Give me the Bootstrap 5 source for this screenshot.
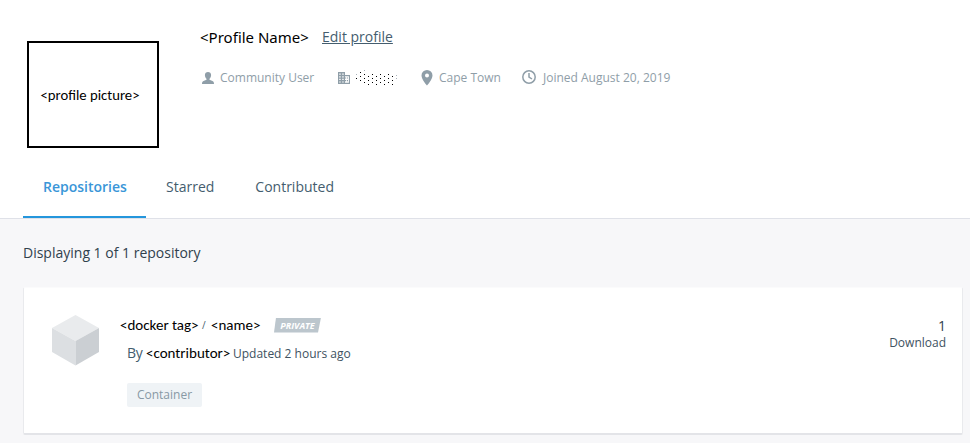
<!DOCTYPE html>
<html lang="en">
<head>
<meta charset="utf-8">
<title>Profile</title>
<link href="https://cdn.jsdelivr.net/npm/bootstrap@5.3.0/dist/css/bootstrap.min.css" rel="stylesheet">
<style>
body{font-family:"Open Sans",sans-serif;font-size:14px;line-height:20px;color:#445d6e;background:#f7f7f9;height:443px;overflow:hidden}
.profile-head{height:219px;border-bottom:1px solid #dfe1e8}
.head-top{height:157px;padding:27px 0 0 27px}
.picture{width:132px;height:107px;border:2px solid #000;margin-top:14px;margin-right:41px;padding:1px 6px 0 0}
.placeholder-text{font-family:Carlito,Lato,sans-serif;font-size:15px;color:#000;white-space:nowrap}
.picture .placeholder-text{font-size:14.7px}
.profile-name{font-family:"Noto Sans",sans-serif;font-size:15px;color:#000;width:122px;white-space:nowrap}
.edit-link{color:#445d6e}
.meta{font-size:12px;color:#8f9ea8;margin-top:21px;white-space:nowrap}
.meta svg{flex:none;fill:#8f9ea8}
.meta .dots{fill:#000;margin:0 23px 0 6px}
.meta .clock{fill:none;stroke:#8f9ea8;stroke-width:1.5;margin:-2px 5px 0 -1px}
.meta .joined{margin-left:1px}
.user-icon{margin:0 6px 1px 2px}
.user-label{width:118px}
.place-label{margin-left:6px;width:83px}
.tabs{height:61px;margin-left:23px}
.tabs .nav-link{height:61px;padding:20px 20px 0;border-radius:0;color:#445d6e;line-height:20px}
.tabs .nav-link.active{width:123px;padding-right:0;color:#3a96d8;font-weight:600;border-bottom:2px solid #2496dc}
.tabs .active + .nav-link{padding-right:21px}
.count{margin:24px 0 0 23px;color:#30414d}
.repo{margin:24px 7px 0 23px;height:148px;border:1px solid #e9eaed;border-top-color:#fbfbfc;border-bottom:2px solid #e3e4e8;border-radius:2px;padding:27px 16px 0 28px;--bs-card-bg:#fff}
.repo-body{margin-left:21px}
.repo-tag{width:82px}
.repo-slash{width:9px;font-size:10px}
.repo-name{width:63px}
.by{width:19px;letter-spacing:-.2px}
.by-name{width:87px}
.ribbon{font-size:9px;font-weight:700;font-style:italic;line-height:16px;height:15px;width:47px;background:#bcc6cd;color:#fff;clip-path:polygon(2px 0,100% 0,calc(100% - 3px) 100%,0 100%);text-align:center}
.by-row{margin:8px 0 0 7px}
.tag{font-size:12px;width:75px;height:24px;line-height:24px;background:#eff3f6;color:#8899a5;border-radius:2px;margin:19px 0 0 7px}
.small-dark{font-size:12px;color:#405261}
.stats{line-height:17px;padding-top:2px}
.stats-num{font-size:14px;color:#30414d}
</style>
<script src="https://cdn.jsdelivr.net/npm/bootstrap@5.3.0/dist/js/bootstrap.bundle.min.js"></script>
</head>
<body>
<header class="profile-head bg-white">
  <div class="head-top d-flex align-items-start">
    <div class="picture d-flex align-items-center justify-content-center"><span class="placeholder-text">&lt;profile picture&gt;</span></div>
    <div>
      <div class="d-flex"><span class="profile-name">&lt;Profile Name&gt;</span><a class="edit-link" href="#">Edit profile</a></div>
      <div class="meta d-flex align-items-center">
        <svg class="user-icon" width="12" height="12" viewBox="0 0 12 12"><path d="M6 0C4.200 0 2.900 1.200 2.900 3c0 1.700.8 3.200 1.600 3.800v1L1.500 9C.4 9.500 0 10.300 0 12h12c0-1.700-.4-2.500-1.500-3L7.500 7.800v-1C8.300 6.200 9.100 4.700 9.100 3 9.100 1.200 7.800 0 6 0z"/></svg>
        <span class="user-label">Community User</span>
        <svg width="12" height="12" viewBox="0 0 12 12"><path fill-rule="evenodd" d="M0 0h7v3h5v9H0zM1.200 1.500v1.200h1.500V1.500zM4.200 1.500v1.200h1.500V1.500zM1.200 4.200v1.200h1.500V4.200zM4.200 4.200v1.200h1.500V4.200zM1.200 6.800V8h1.500V6.800zM4.200 6.800V8h1.500V6.800zM1.200 9.400v1.200h1.500V9.400zM4.200 9.400v1.200h1.500V9.400zM7 4.200v1.200h1.200v1.200H7V8h1.200v1.200H7v1.600h3.900V4.200zM9 5.400h1v1.200H9zM9 8h1v1.200H9z"/></svg>
        <svg class="dots" width="42" height="16" viewBox="0 0 42 16" shape-rendering="crispEdges"><path d="M0 8h1v1H0zM4 2h1v1H4zM4 6h1v1H4zM4 10h1v1H4zM8 4h1v1H8zM8 8h1v1H8zM8 12h1v1H8zM12 6h1v1h-1zM12 10h1v1h-1zM12 14h1v1h-1zM16 4h1v1h-1zM16 8h1v1h-1zM16 12h1v1h-1zM20 6h1v1h-1zM20 10h1v1h-1zM20 14h1v1h-1zM24 4h1v1h-1zM24 8h1v1h-1zM24 12h1v1h-1zM28 6h1v1h-1zM28 10h1v1h-1zM28 14h1v1h-1zM32 4h1v1h-1zM32 8h1v1h-1zM32 12h1v1h-1zM36 6h1v1h-1zM36 10h1v1h-1zM36 14h1v1h-1z"/><path fill="#aab3bb" d="M0 4h1v1H0zM8 0h1v1H8zM40 5h1v1h-1zM40 8h1v1h-1z"/></svg>
        <svg width="12" height="16" viewBox="0 0 12 16"><path fill-rule="evenodd" d="M6 0a5.500 5.500 0 0 0-5.500 5.500C.5 9.500 6 15.500 6 15.500s5.500-6 5.500-10A5.500 5.500 0 0 0 6 0zm0 3.500a2 2 0 1 1 0 4 2 2 0 0 1 0-4z"/></svg>
        <span class="place-label">Cape Town</span>
        <svg class="clock" width="16" height="16" viewBox="0 0 16 16"><path d="M14.200 8A6.200 6.200 0 1 1 1.800 8a6.200 6.200 0 0 1 12.400 0zM8 4v4l3 2"/></svg>
        <span class="joined">Joined August 20, 2019</span>
      </div>
    </div>
  </div>
  <nav class="tabs nav"><a class="nav-link active" href="#">Repositories</a><a class="nav-link" href="#">Starred</a><a class="nav-link" href="#">Contributed</a></nav>
</header>
<main>
  <div class="count">Displaying 1 of 1 repository</div>
  <section class="card repo flex-row align-items-start">
    <svg width="47" height="51" viewBox="0 0 47 51"><path fill="#e9ebed" d="M23.500 0 47 13 23.500 26 0 13z"/><path fill="#dcdfe2" d="M0 13l23.500 13v24.500L0 37z"/><path fill="#cbcfd3" d="M47 13 23.500 26v24.500L47 37z"/></svg>
    <div class="repo-body">
      <div class="d-flex align-items-center"><span class="placeholder-text repo-tag">&lt;docker tag&gt;</span><span class="repo-slash">/</span><span class="placeholder-text repo-name">&lt;name&gt;</span><span class="ribbon">PRIVATE</span></div>
      <div class="by-row d-flex align-items-baseline"><span class="by">By</span><span class="placeholder-text by-name">&lt;contributor&gt;</span><span class="small-dark">Updated 2 hours ago</span></div>
      <div class="tag text-center">Container</div>
    </div>
    <div class="ms-auto text-end small-dark stats"><div class="stats-num">1</div><div>Download</div></div>
  </section>
</main>
</body>
</html>
